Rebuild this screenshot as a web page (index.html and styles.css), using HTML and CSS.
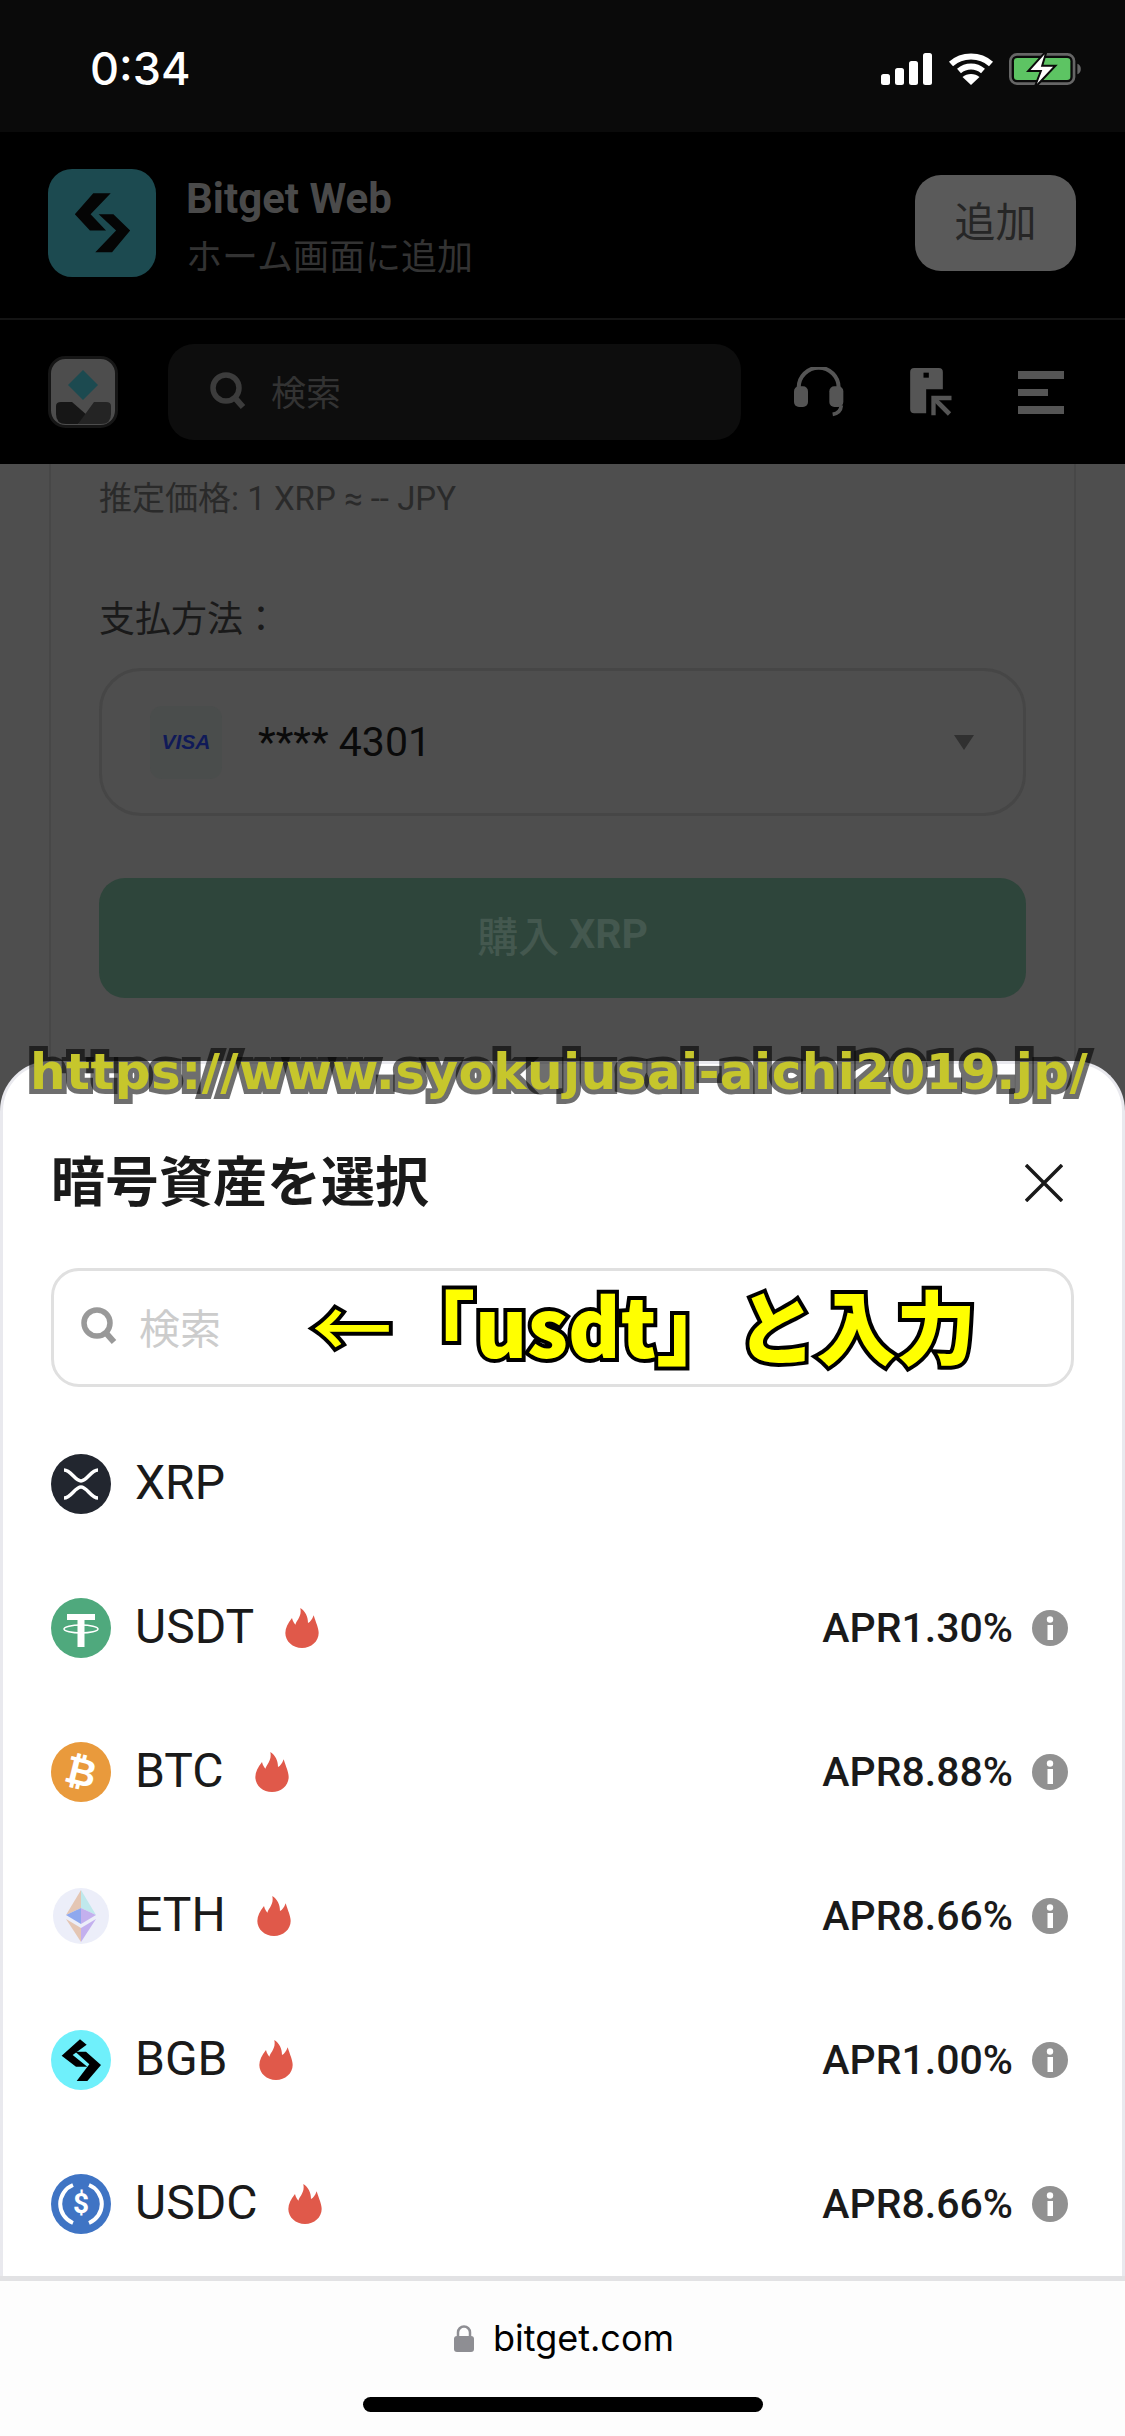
FILE: index.html
```html
<!DOCTYPE html>
<html lang="ja">
<head>
    <meta charset="UTF-8">
    <title>Bitget Web</title>
    <link rel="stylesheet" href="styles.css">
</head>
<body>
    <svg class="defs" width="0" height="0">
        <symbol id="flame" viewBox="0 0 100 120">
            <path d="M45 0C50 25 35 35 30 50C27 45 22 40 20 30C8 45 0 60 0 75C0 100 22 120 50 120C78 120 100 100 100 75C100 60 92 45 85 22C80 35 75 42 68 45C68 25 60 10 45 0Z" fill="#e0594a"/>
        </symbol>
        <symbol id="info" viewBox="0 0 36 36">
            <circle cx="18" cy="18" r="18" fill="#919191"/>
            <rect x="15.5" y="15" width="5.5" height="15" fill="#fff"/>
            <circle cx="18" cy="9.5" r="3.2" fill="#fff"/>
        </symbol>
    </svg>

    <div class="screen">
        <div class="status">
            <span class="time">0:34</span>
            <div class="status-icons">
                <svg width="52" height="32" viewBox="0 0 52 32" fill="#fff">
                    <rect x="0" y="21" width="9" height="11" rx="2.5"/>
                    <rect x="14" y="15" width="9" height="17" rx="2.5"/>
                    <rect x="28" y="8" width="9" height="24" rx="2.5"/>
                    <rect x="42" y="0" width="9" height="32" rx="2.5"/>
                </svg>
                <svg width="46" height="32" viewBox="0 0 46 32" fill="none" stroke="#fff" stroke-width="6">
                    <path d="M3 11C14 1 32 1 43 11"/>
                    <path d="M11 18C18 12 28 12 35 18"/>
                    <path d="M23 32L14.500 24C19 20 27 20 31.500 24Z" fill="#fff" stroke="none"/>
                </svg>
                <svg class="battery" width="73" height="32" viewBox="448 38 220 96">
                    <rect x="452" y="42" width="192" height="88" rx="20" fill="none" stroke="#666" stroke-width="8"/>
                    <rect x="463" y="53" width="170" height="66" rx="10" fill="#5dc463"/>
                    <path d="M654 70C668 74 668 98 654 102Z" fill="#666"/>
                    <path d="M562 30L506 92H544L524 144L588 76H548Z" fill="#fff" stroke="#0a0a0a" stroke-width="6"/>
                </svg>
            </div>
        </div>

        <div class="banner">
            <svg class="app-icon" viewBox="55 30 322 322">
                <rect x="55" y="30" width="322" height="322" rx="72" fill="#1c4a50"/>
                <path d="M190 102H242L182 165L228 213H180L135 165Z" fill="#050505"/>
                <path d="M196 278H246L300 213L250 165H206L258 213Z" fill="#050505"/>
            </svg>
            <div class="banner-text">
                <div class="banner-title">Bitget Web</div>
                <div class="banner-sub">ホーム画面に追加</div>
            </div>
            <div class="add-btn"><span>追加</span></div>
        </div>

        <div class="nav">
            <svg class="nav-logo" viewBox="0 0 70 72">
                <rect x="1.500" y="1.500" width="67" height="69" rx="16" fill="#4d4d4d" stroke="#161616" stroke-width="3"/>
                <path d="M35 14L50 29L35 44L20 29Z" fill="#1c4a50"/>
                <path d="M8 50Q8 46 13 46H24L40 60L30 68H18Q8 68 8 58Z" fill="#161616"/>
                <path d="M30 68L46 46H58Q63 46 63 50V58Q63 68 53 68Z" fill="#242424"/>
            </svg>
            <div class="nav-search">
                <svg class="search-icon" width="36" height="38" viewBox="0 0 36 38" fill="none" stroke="#3c3c3c">
                    <circle cx="16" cy="16" r="13" stroke-width="5.500"/>
                    <path d="M25 26L33 35" stroke-width="6"/>
                </svg>
                <span>検索</span>
            </div>
            <div class="nav-icons">
                <svg width="50" height="50" viewBox="72 90 150 150" fill="#555">
                    <path d="M86 160V152A60 60 0 0 1 206 152V160" fill="none" stroke="#555" stroke-width="12"/>
                    <rect x="72" y="148" width="42" height="62" rx="15"/>
                    <rect x="178" y="148" width="42" height="62" rx="15"/>
                    <path d="M214 205Q212 228 188 232" fill="none" stroke="#555" stroke-width="11"/>
                </svg>
                <svg class="doc-icon" width="42" height="48" viewBox="422 88 125 144" fill="#555">
                    <path d="M434 88H508Q520 88 520 100V152H470V224H434Q422 224 422 212V100Q422 88 434 88Z"/>
                    <rect x="462" y="102" width="16" height="15" fill="#000"/>
                    <path d="M546 178H492V230" fill="none" stroke="#555" stroke-width="13"/>
                    <path d="M494 180L540 226" fill="none" stroke="#555" stroke-width="14"/>
                </svg>
                <svg class="menu-icon" width="46" height="43" viewBox="0 0 46 43" fill="#555">
                    <rect x="0" y="0" width="46" height="8"/>
                    <rect x="0" y="18" width="30" height="7"/>
                    <rect x="0" y="35" width="46" height="8"/>
                </svg>
            </div>
        </div>

        <div class="main">
            <div class="page">
                <div class="card">
                    <div class="price">推定価格: 1 XRP ≈ -- JPY</div>
                    <div class="pay-label">支払方法：</div>
                    <div class="pay-select">
                        <div class="visa-chip">VISA</div>
                        <span class="card-num">**** 4301</span>
                        <span class="caret"></span>
                    </div>
                    <div class="buy-btn">購入 <b>XRP</b></div>
                </div>
            </div>

            <div class="sheet">
                <div class="sheet-head">
                    <h2>暗号資産を選択</h2>
                    <svg width="38" height="38" viewBox="0 0 38 38" stroke="#1a1a1a" stroke-width="3.500">
                        <path d="M1 1L37 37M37 1L1 37"/>
                    </svg>
                </div>
                <div class="sheet-search">
                    <svg width="36" height="38" viewBox="0 0 36 38" fill="none" stroke="#999">
                        <circle cx="16" cy="16" r="13" stroke-width="5.500"/>
                        <path d="M25 26L33 35" stroke-width="6"/>
                    </svg>
                    <span>検索</span>
                </div>

                <ul class="coins">
                    <li class="coin">
                        <svg class="coin-icon" viewBox="0 0 60 60">
                            <circle cx="30" cy="30" r="30" fill="#22262f"/>
                            <path d="M13 16C20 16 24 27 30 27C36 27 40 16 47 16M13 44C20 44 24 33 30 33C36 33 40 44 47 44" fill="none" stroke="#fff" stroke-width="3.500"/>
                        </svg>
                        <span class="coin-name">XRP</span>
                    </li>
                    <li class="coin">
                        <svg class="coin-icon" viewBox="0 0 60 60">
                            <circle cx="30" cy="30" r="30" fill="#4fa97d"/>
                            <path d="M16 16H44V22H33.500V49H26.500V22H16Z" fill="#fff"/>
                            <ellipse cx="30" cy="31" rx="17" ry="4" fill="none" stroke="#fff" stroke-width="1.500"/>
                        </svg>
                        <span class="coin-name">USDT</span>
                        <svg class="flame"><use href="#flame"/></svg>
                        <span class="apr">APR1.30%</span>
                        <svg class="info"><use href="#info"/></svg>
                    </li>
                    <li class="coin">
                        <svg class="coin-icon" viewBox="0 0 60 60">
                            <circle cx="30" cy="30" r="30" fill="#e99a3c"/>
                            <text x="30" y="43" class="btc-mark" transform="rotate(14 30 30)">₿</text>
                        </svg>
                        <span class="coin-name">BTC</span>
                        <svg class="flame"><use href="#flame"/></svg>
                        <span class="apr">APR8.88%</span>
                        <svg class="info"><use href="#info"/></svg>
                    </li>
                    <li class="coin">
                        <svg class="coin-icon" viewBox="0 0 60 60">
                            <circle cx="30" cy="30" r="28" fill="#eceef9"/>
                            <path d="M30 4L15 29L30 22Z" fill="#e4c6b4"/>
                            <path d="M30 4L45 29L30 22Z" fill="#bfe8ec"/>
                            <path d="M30 22L15 29L30 38Z" fill="#8fa8ee"/>
                            <path d="M30 22L45 29L30 38Z" fill="#c3b0ee"/>
                            <path d="M15 33L30 42V56Z" fill="#e4c6b4"/>
                            <path d="M45 33L30 42V56Z" fill="#c3b0ee"/>
                        </svg>
                        <span class="coin-name">ETH</span>
                        <svg class="flame"><use href="#flame"/></svg>
                        <span class="apr">APR8.66%</span>
                        <svg class="info"><use href="#info"/></svg>
                    </li>
                    <li class="coin">
                        <svg class="coin-icon" viewBox="153 450 180 180">
                            <circle cx="243" cy="540" r="90" fill="#6ff0fb"/>
                            <path d="M240 478L260 494L218 525L262 560H228L185 527Z" fill="#000"/>
                            <path d="M230 603H262L303 555L258 515H226L268 553Z" fill="#000"/>
                        </svg>
                        <span class="coin-name">BGB</span>
                        <svg class="flame"><use href="#flame"/></svg>
                        <span class="apr">APR1.00%</span>
                        <svg class="info"><use href="#info"/></svg>
                    </li>
                    <li class="coin">
                        <svg class="coin-icon" viewBox="0 0 60 60">
                            <circle cx="30" cy="30" r="30" fill="#3f74c4"/>
                            <path d="M22 11A20.500 20.500 0 0 0 22 49M38 11A20.500 20.500 0 0 1 38 49" fill="none" stroke="#fff" stroke-width="4"/>
                            <text x="30" y="39" class="usdc-mark">$</text>
                        </svg>
                        <span class="coin-name">USDC</span>
                        <svg class="flame"><use href="#flame"/></svg>
                        <span class="apr">APR8.66%</span>
                        <svg class="info"><use href="#info"/></svg>
                    </li>
                </ul>
            </div>

            <div class="note-url">https://www.syokujusai-aichi2019.jp/</div>
            <div class="note-input"><span class="note-arrow">←</span>「usdt」と入力</div>
        </div>

        <div class="browser-bar">
            <div class="address">
                <svg width="20" height="27" viewBox="0 0 20 27">
                    <path d="M4 12V7.500A6 6 0 0 1 16 7.500V12" fill="none" stroke="#8e8e93" stroke-width="2.500"/>
                    <rect x="0" y="11" width="20" height="16" rx="3" fill="#8e8e93"/>
                </svg>
                <span>bitget.com</span>
            </div>
            <div class="home-bar"></div>
        </div>
    </div>
</body>
</html>
```

FILE: styles.css
```css
* {
    box-sizing: border-box;
}
body {
    margin: 0;
    background: #000;
    font-family: "Noto Sans CJK JP", Roboto, sans-serif;
    overflow: hidden;
}
.defs {
    display: block;
    height: 0;
}
.screen {
    width: 1125px;
    height: 2436px;
    display: flex;
    flex-direction: column;
}

/* status bar */
.status {
    height: 132px;
    background: #0a0a0a;
    display: flex;
    justify-content: space-between;
    padding: 53px 43px 0 90px;
}
.time {
    font-family: Inter, sans-serif;
    font-weight: 500;
    font-size: 45px;
    line-height: 32px;
    color: #fff;
}
.status-icons {
    display: flex;
    gap: 15px;
    align-items: flex-start;
}
.battery {
    overflow: visible;
}

/* add to home banner */
.banner {
    height: 188px;
    background: #000;
    border-bottom: 2px solid #141414;
    display: flex;
    align-items: center;
    padding: 0 49px 4px 48px;
}
.app-icon {
    width: 108px;
    height: 108px;
}
.banner-text {
    margin-left: 30px;
    padding-top: 7px;
    flex: 1;
}
.banner-title {
    font-family: Roboto, sans-serif;
    font-weight: 700;
    font-size: 42px;
    line-height: 48px;
    color: #4a4a4a;
}
.banner-sub {
    font-size: 36px;
    line-height: 50px;
    margin-top: 6px;
    color: #333;
}
.add-btn {
    width: 161px;
    height: 96px;
    background: #5a5a5a;
    border-radius: 26px;
    color: #262626;
    font-size: 41px;
    display: flex;
    align-items: center;
    justify-content: center;
    padding-bottom: 8px;
}

/* site nav */
.nav {
    height: 144px;
    background: #000;
    display: flex;
    align-items: center;
    padding: 0 61px 0 48px;
}
.nav-logo {
    width: 70px;
    height: 72px;
}
.nav-search {
    width: 573px;
    height: 96px;
    margin-left: 50px;
    background: #0d0d0d;
    border-radius: 26px;
    display: flex;
    align-items: center;
    gap: 25px;
    padding: 0 0 3px 42px;
    font-size: 35px;
    color: #333;
}
.nav-icons {
    display: flex;
    align-items: center;
    margin-left: 53px;
}
.doc-icon {
    margin-left: 66px;
}
.menu-icon {
    margin-left: 66px;
}

/* page + sheet */
.main {
    position: relative;
    height: 1812px;
    overflow: hidden;
    background: #4e4e4e;
}
.page {
    padding: 0 49px;
    height: 100%;
}
.card {
    height: 100%;
    border-left: 2px solid #474747;
    border-right: 2px solid #474747;
    padding: 0 48px;
}
.price {
    font-family: Roboto, "Noto Sans CJK JP", sans-serif;
    font-size: 33px;
    line-height: 48px;
    padding-top: 11px;
    color: #2a2a2a;
}
.pay-label {
    font-size: 36px;
    line-height: 52px;
    margin-top: 67px;
    color: #1a1a1a;
}
.pay-select {
    height: 148px;
    margin-top: 26px;
    border: 3px solid #464646;
    border-radius: 42px;
    display: flex;
    align-items: center;
    padding: 0 49px 0 48px;
}
.visa-chip {
    width: 72px;
    height: 73px;
    background: #4a4d4c;
    border-radius: 12px;
    display: flex;
    align-items: center;
    justify-content: center;
    font-family: "Liberation Sans", sans-serif;
    font-style: italic;
    font-weight: 700;
    font-size: 21px;
    color: #101a58;
}
.card-num {
    flex: 1;
    margin-left: 36px;
    font-family: Roboto, sans-serif;
    font-size: 41px;
    color: #0a0a0a;
}
.caret {
    width: 0;
    height: 0;
    border-left: 10px solid transparent;
    border-right: 10px solid transparent;
    border-top: 15px solid #303030;
}
.buy-btn {
    height: 120px;
    margin-top: 62px;
    background: #2e453b;
    border-radius: 26px;
    display: flex;
    align-items: center;
    justify-content: center;
    gap: 10px;
    padding-bottom: 8px;
    font-size: 41px;
    font-weight: 500;
    color: #44584f;
}
.buy-btn b {
    font-family: Roboto, sans-serif;
    font-weight: 700;
}

.sheet {
    position: absolute;
    left: 0;
    right: 0;
    bottom: 0;
    height: 1215px;
    background: #fff;
    border: 3px solid #e9e9ee;
    border-bottom: none;
    border-radius: 50px 50px 0 0;
    padding: 0 48px;
}
.sheet-head {
    display: flex;
    justify-content: space-between;
    align-items: center;
    margin: 88px 11px 0 0;
    height: 62px;
}
.sheet-head h2 {
    margin: 0 0 8px;
    font-size: 54px;
    line-height: 62px;
    font-weight: 700;
    color: #1a1a1a;
}
.sheet-search {
    height: 119px;
    margin-top: 54px;
    border: 3px solid #e0e0e0;
    border-radius: 28px;
    display: flex;
    align-items: center;
    gap: 22px;
    padding: 0 0 3px 27px;
    font-size: 41px;
    color: #ccc;
}
.coins {
    list-style: none;
    margin: 25px 0 0;
    padding: 0;
}
.coin {
    height: 144px;
    display: flex;
    align-items: center;
}
.coin-icon {
    width: 60px;
    height: 60px;
}
.coin-name {
    margin-left: 24px;
    font-family: Roboto, sans-serif;
    font-size: 48px;
    line-height: 56px;
    margin-bottom: 2px;
    color: #1a1a1a;
}
.flame {
    width: 34px;
    height: 40px;
    margin-left: 31px;
}
.apr {
    margin-left: auto;
    font-family: Roboto, sans-serif;
    font-weight: 500;
    font-size: 41px;
    color: #1a1a1a;
}
.info {
    width: 36px;
    height: 36px;
    margin: 0 6px 0 19px;
}
.btc-mark {
    font-family: "DejaVu Sans", sans-serif;
    font-weight: 700;
    font-size: 38px;
    fill: #fff;
    text-anchor: middle;
}
.usdc-mark {
    font-family: Roboto, sans-serif;
    font-weight: 700;
    font-size: 28px;
    fill: #fff;
    text-anchor: middle;
}

/* yellow notes pasted over the screenshot */
.note-url {
    position: absolute;
    left: 30px;
    top: 578px;
    font-family: "DejaVu Sans", sans-serif;
    font-weight: 700;
    font-size: 50px;
    line-height: 60px;
    letter-spacing: 0.45px;
    white-space: nowrap;
    color: #c6c62c;
    -webkit-text-stroke: 10px rgba(0, 0, 0, 0.57);
    paint-order: stroke fill;
}
.note-input {
    position: absolute;
    left: 312px;
    top: 809px;
    font-weight: 900;
    font-size: 80px;
    line-height: 100px;
    white-space: nowrap;
    color: #ff0;
    -webkit-text-stroke: 8px #000;
    paint-order: stroke fill;
}
.note-arrow {
    font-weight: 500;
    margin-right: 3px;
}

/* safari address bar */
.browser-bar {
    height: 160px;
    background: #fdfdfd;
    border-top: 5px solid #e2e2e4;
    display: flex;
    flex-direction: column;
    align-items: center;
}
.address {
    display: flex;
    align-items: center;
    gap: 19px;
    margin: 34px 0 0 3px;
    height: 46px;
    font-family: Inter, sans-serif;
    font-size: 36px;
    color: #000;
}
.home-bar {
    width: 400px;
    height: 15px;
    margin-top: 36px;
    background: #000;
    border-radius: 8px;
}
```
